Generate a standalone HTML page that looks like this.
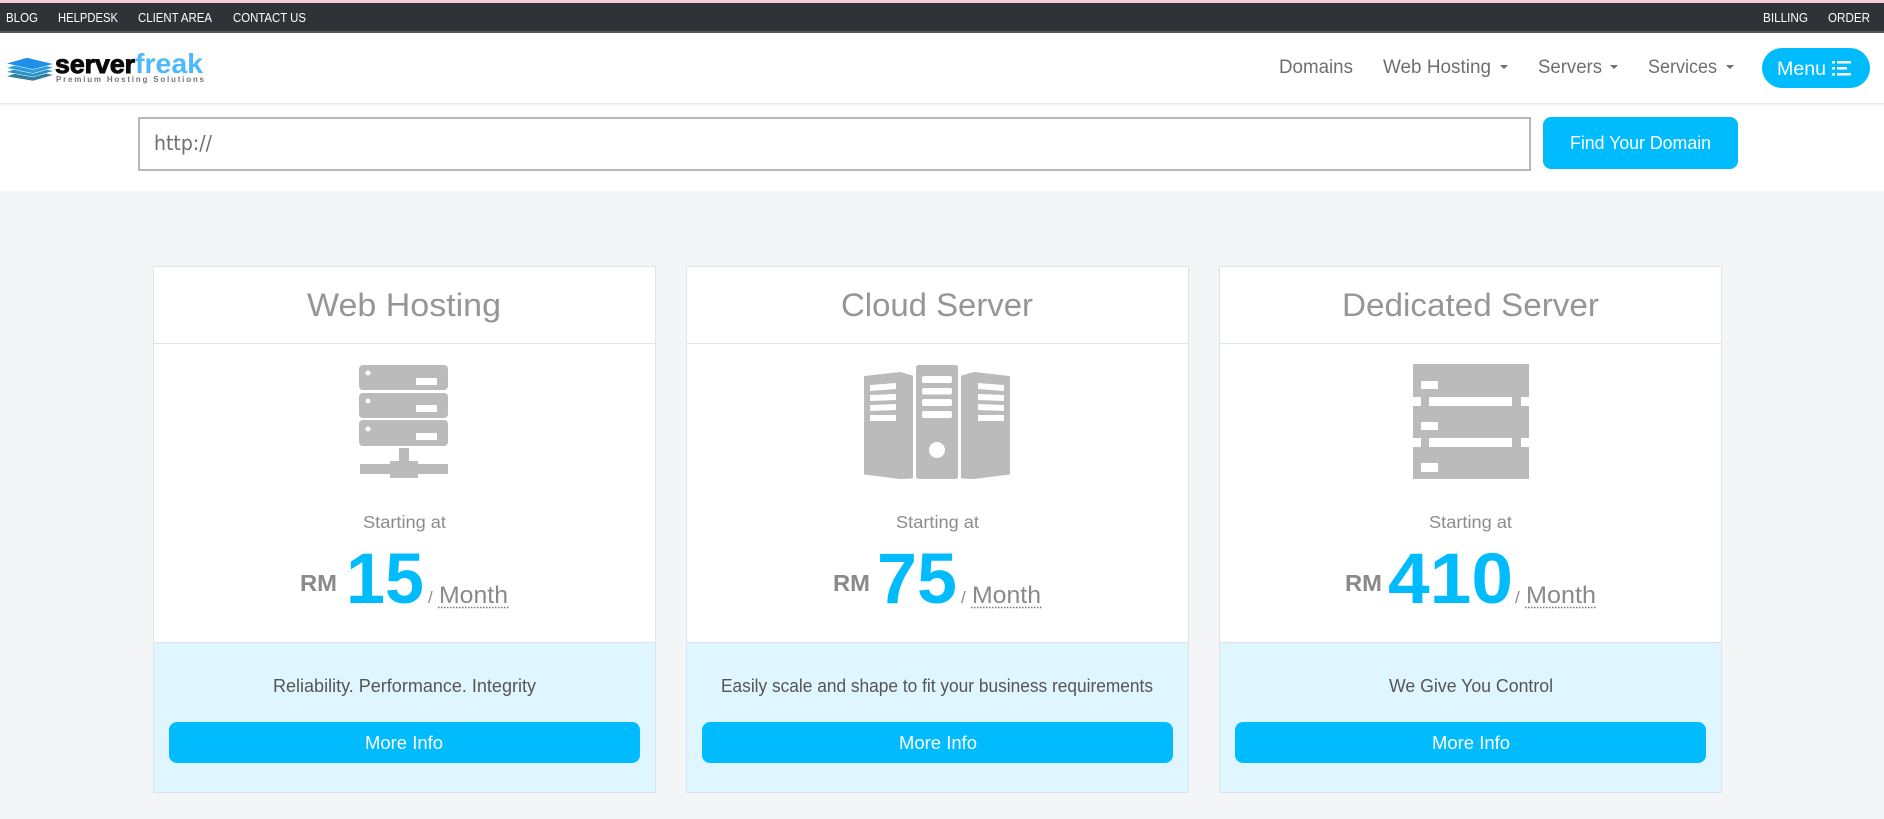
<!DOCTYPE html>
<html lang="en"><head><meta charset="utf-8"><title>Server Freak</title>
<style>
html,body{margin:0;padding:0;width:1884px;height:819px;overflow:hidden;background:#f4f5f7}
svg{position:absolute;left:0;top:0;display:block}
text{font-family:"Liberation Sans",sans-serif}
.tb{font-size:12.5px;fill:#fff}
.nv{font-size:19px;fill:#6f6f6f}
.ti{font-size:32px;fill:#969696}
.st{font-size:17.5px;fill:#8c8c8c}
.rm{font-size:23px;font-weight:bold;fill:#8a8a8a}
.pr{font-size:71px;font-weight:bold;fill:#00bcff}
.sl{font-size:17px;fill:#8a8a8a}
.mo{font-size:24px;fill:#8a8a8a}
.de{font-size:18px;fill:#555}
.bt{font-size:18px;fill:#fff}
.ic{fill:#bbb}
.w{fill:#fff}
</style></head><body>
<svg width="1884" height="819" viewBox="0 0 1884 819" xmlns="http://www.w3.org/2000/svg">
<rect width="1884" height="819" fill="#f4f5f7"/>
<!-- top bar -->
<rect width="1884" height="3" fill="#f6cdd5"/>
<rect y="3" width="1884" height="29" fill="#2f3236"/>
<rect y="31" width="1884" height="2" fill="#55585b"/>
<text class="tb" x="6" y="22" textLength="32" lengthAdjust="spacingAndGlyphs">BLOG</text>
<text class="tb" x="58" y="22" textLength="60" lengthAdjust="spacingAndGlyphs">HELPDESK</text>
<text class="tb" x="138" y="22" textLength="74" lengthAdjust="spacingAndGlyphs">CLIENT AREA</text>
<text class="tb" x="233" y="22" textLength="73" lengthAdjust="spacingAndGlyphs">CONTACT US</text>
<text class="tb" x="1763" y="22" textLength="45" lengthAdjust="spacingAndGlyphs">BILLING</text>
<text class="tb" x="1828" y="22" textLength="42" lengthAdjust="spacingAndGlyphs">ORDER</text>
<!-- nav and search -->
<rect y="33" width="1884" height="158" fill="#fff"/>
<rect y="103" width="1884" height="1" fill="#e6e6e6"/>
<rect y="104" width="1884" height="2" fill="#f5f5f5"/>
<!-- logo -->
<g stroke="#fff" stroke-width="0.6">
<polygon points="6,76.500 27,69 54,75 33,81" fill="#2d7f9e"/>
<polygon points="6,72 27,65 54,71 33,77" fill="#2b8fc4"/>
<polygon points="6,68 27,61.500 54,67.500 33,73.500" fill="#2a9ce0"/>
<polygon points="6,63.500 27,57.500 54,64 33,69.500" fill="#1f8fe8"/>
</g>
<text x="55" y="73" font-size="26" font-weight="bold" fill="#0a0a0a" stroke="#0a0a0a" stroke-width="1" textLength="80" lengthAdjust="spacingAndGlyphs">server</text>
<text x="135" y="73" font-size="28" font-weight="bold" fill="#4db8fb" textLength="68" lengthAdjust="spacingAndGlyphs">freak</text>
<text x="56" y="82" font-size="8" font-weight="bold" fill="#777" textLength="148">Premium Hosting Solutions</text>
<!-- nav -->
<text class="nv" x="1279" y="73" textLength="74" lengthAdjust="spacingAndGlyphs">Domains</text>
<text class="nv" x="1383" y="73" textLength="108" lengthAdjust="spacingAndGlyphs">Web Hosting</text>
<polygon points="1500,65 1508,65 1504,69" fill="#6f6f6f"/>
<text class="nv" x="1538" y="73" textLength="64" lengthAdjust="spacingAndGlyphs">Servers</text>
<polygon points="1610,65 1618,65 1614,69" fill="#6f6f6f"/>
<text class="nv" x="1648" y="73" textLength="69" lengthAdjust="spacingAndGlyphs">Services</text>
<polygon points="1726,65 1734,65 1730,69" fill="#6f6f6f"/>
<rect x="1762" y="48" width="108" height="40" rx="20" fill="#00bcff"/>
<text x="1777" y="75" font-size="19.5" fill="#fff" textLength="49" lengthAdjust="spacingAndGlyphs">Menu</text>
<g fill="#fff"><rect x="1832" y="61" width="3" height="2.500"/><rect x="1837" y="61" width="14" height="2.500"/><rect x="1832" y="67" width="3" height="2.500"/><rect x="1837" y="67" width="10" height="2.500"/><rect x="1832" y="73" width="3" height="2.500"/><rect x="1837" y="73" width="14" height="2.500"/></g>
<!-- search -->
<rect x="139" y="118" width="1391" height="52" fill="#fff" stroke="#b8b8b8" stroke-width="2"/>
<text x="154" y="150" font-size="20" fill="#6e6e6e" style="font-family:'DejaVu Sans',sans-serif" textLength="58" lengthAdjust="spacingAndGlyphs">http://</text>
<rect x="1543" y="117" width="195" height="52" rx="8" fill="#00bcff"/>
<text class="bt" x="1570" y="149" textLength="141" lengthAdjust="spacingAndGlyphs">Find Your Domain</text>

<!-- card 1 -->
<rect x="153.500" y="266.500" width="502" height="526" fill="#fff" stroke="#dfe4e8"/>
<rect x="154" y="343" width="501" height="1" fill="#dfe4e8"/>
<rect x="153.500" y="642.500" width="502" height="150" fill="#dff5ff" stroke="#d8e3ea"/>
<text class="ti" x="307" y="316" textLength="194" lengthAdjust="spacingAndGlyphs">Web Hosting</text>
<g class="ic">
<rect x="359" y="365" width="89" height="25" rx="4"/><rect x="359" y="393" width="89" height="25" rx="4"/><rect x="359" y="420" width="89" height="26" rx="4"/>
<rect x="399" y="448" width="10" height="14"/><rect x="360" y="464" width="88" height="10"/><rect x="390" y="461" width="28" height="17"/>
</g>
<g class="w">
<circle cx="368" cy="373" r="2.500"/><circle cx="368" cy="401" r="2.500"/><circle cx="368" cy="429" r="2.500"/>
<rect x="416" y="378" width="21" height="7"/><rect x="416" y="405" width="21" height="7"/><rect x="416" y="433" width="21" height="7"/>
</g>
<text class="st" x="363" y="528" textLength="83" lengthAdjust="spacingAndGlyphs">Starting at</text>
<text class="rm" x="300" y="591" textLength="37" lengthAdjust="spacingAndGlyphs">RM</text>
<text class="pr" x="346" y="603" textLength="78" lengthAdjust="spacingAndGlyphs">15</text>
<text class="sl" x="428" y="603">/</text>
<text class="mo" x="439" y="603" textLength="69" lengthAdjust="spacingAndGlyphs">Month</text>
<line x1="438" x2="509" y1="607.500" y2="607.500" stroke="#777" stroke-width="1.500" stroke-dasharray="1.500 1.500"/>
<text class="de" x="273" y="692" textLength="263" lengthAdjust="spacingAndGlyphs">Reliability. Performance. Integrity</text>
<rect x="169" y="722" width="471" height="41" rx="8" fill="#00bcff"/>
<text class="bt" x="365" y="749" textLength="78" lengthAdjust="spacingAndGlyphs">More Info</text>

<!-- card 2 -->
<rect x="686.500" y="266.500" width="502" height="526" fill="#fff" stroke="#dfe4e8"/>
<rect x="687" y="343" width="501" height="1" fill="#dfe4e8"/>
<rect x="686.500" y="642.500" width="502" height="150" fill="#dff5ff" stroke="#d8e3ea"/>
<text class="ti" x="841" y="316" textLength="192" lengthAdjust="spacingAndGlyphs">Cloud Server</text>
<g class="ic" stroke="#bbb" stroke-width="1" stroke-linejoin="round">
<rect x="916.500" y="365.500" width="41" height="113" rx="2"/>
<polygon points="864.500,376.500 900,372.500 912.500,376 912.500,478 900,478.500 864.500,474"/>
<polygon points="1009.500,376.500 974,372.500 961.500,376 961.500,478 974,478.500 1009.500,474"/>
</g>
<g class="w">
<rect x="922" y="376" width="30" height="7" rx="2"/><rect x="922" y="388" width="30" height="6.500" rx="2"/><rect x="922" y="399" width="30" height="7" rx="2"/><rect x="922" y="411" width="30" height="7" rx="2"/>
<circle cx="937" cy="450" r="8"/>
<polygon points="870,385 896,383 896,389 870,391"/><polygon points="870,395 896,394 896,400 870,401"/><polygon points="870,405 896,404 896,410 870,411"/><polygon points="870,415 896,415 896,421 870,421"/>
<polygon points="1004,385 978,383 978,389 1004,391"/><polygon points="1004,395 978,394 978,400 1004,401"/><polygon points="1004,405 978,404 978,410 1004,411"/><polygon points="1004,415 978,415 978,421 1004,421"/>
</g>
<text class="st" x="896" y="528" textLength="83" lengthAdjust="spacingAndGlyphs">Starting at</text>
<text class="rm" x="833" y="591" textLength="37" lengthAdjust="spacingAndGlyphs">RM</text>
<text class="pr" x="877" y="603" textLength="80" lengthAdjust="spacingAndGlyphs">75</text>
<text class="sl" x="961" y="603">/</text>
<text class="mo" x="972" y="603" textLength="69" lengthAdjust="spacingAndGlyphs">Month</text>
<line x1="971" x2="1042" y1="607.500" y2="607.500" stroke="#777" stroke-width="1.500" stroke-dasharray="1.500 1.500"/>
<text class="de" x="721" y="692" textLength="432" lengthAdjust="spacingAndGlyphs">Easily scale and shape to fit your business requirements</text>
<rect x="702" y="722" width="471" height="41" rx="8" fill="#00bcff"/>
<text class="bt" x="899" y="749" textLength="78" lengthAdjust="spacingAndGlyphs">More Info</text>

<!-- card 3 -->
<rect x="1219.500" y="266.500" width="502" height="526" fill="#fff" stroke="#dfe4e8"/>
<rect x="1220" y="343" width="501" height="1" fill="#dfe4e8"/>
<rect x="1219.500" y="642.500" width="502" height="150" fill="#dff5ff" stroke="#d8e3ea"/>
<text class="ti" x="1342" y="316" textLength="257" lengthAdjust="spacingAndGlyphs">Dedicated Server</text>
<rect class="ic" x="1413" y="364" width="116" height="115"/>
<g class="w">
<rect x="1413" y="397" width="8" height="9"/><rect x="1429" y="397" width="83" height="9"/><rect x="1521" y="397" width="8" height="9"/>
<rect x="1413" y="438" width="8" height="9"/><rect x="1429" y="438" width="83" height="9"/><rect x="1521" y="438" width="8" height="9"/>
<rect x="1421" y="381" width="17" height="8"/><rect x="1421" y="422" width="17" height="8"/><rect x="1421" y="463" width="17" height="9"/>
</g>
<text class="st" x="1429" y="528" textLength="83" lengthAdjust="spacingAndGlyphs">Starting at</text>
<text class="rm" x="1345" y="591" textLength="37" lengthAdjust="spacingAndGlyphs">RM</text>
<text class="pr" x="1388" y="603" textLength="125" lengthAdjust="spacingAndGlyphs">410</text>
<text class="sl" x="1515" y="603">/</text>
<text class="mo" x="1526" y="603" textLength="70" lengthAdjust="spacingAndGlyphs">Month</text>
<line x1="1525" x2="1596" y1="607.500" y2="607.500" stroke="#777" stroke-width="1.500" stroke-dasharray="1.500 1.500"/>
<text class="de" x="1389" y="692" textLength="164" lengthAdjust="spacingAndGlyphs">We Give You Control</text>
<rect x="1235" y="722" width="471" height="41" rx="8" fill="#00bcff"/>
<text class="bt" x="1432" y="749" textLength="78" lengthAdjust="spacingAndGlyphs">More Info</text>
</svg>
</body></html>
